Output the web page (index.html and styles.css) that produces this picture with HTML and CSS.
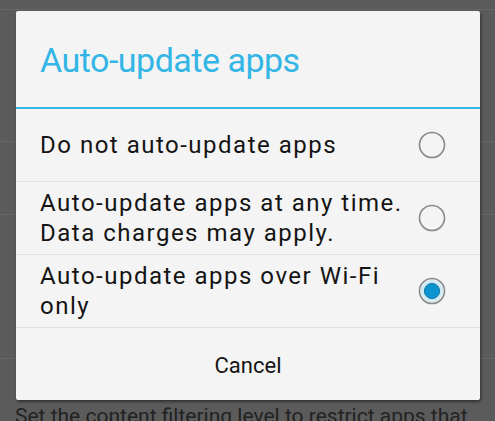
FILE: index.html
```html
<!DOCTYPE html>
<html>
<head>
<meta charset="utf-8">
<link rel="stylesheet" href="styles.css">
</head>
<body>
<div class="screen">
  <div class="bg-list">
    <div class="bg-row r1"></div>
    <div class="bg-row r2"></div>
    <div class="bg-row r3"></div>
    <div class="bg-row r4"></div>
    <div class="bg-head">Content filtering</div>
    <div class="bg-text">Set the content filtering level to restrict apps that</div>
  </div>

  <div class="dialog">
    <div class="title">Auto-update apps</div>
    <div class="option">
      <span class="label">Do not auto-update apps</span>
      <svg class="radio" width="28" height="28" viewBox="0 0 28 28"><circle cx="14" cy="14" r="12.5" fill="none" stroke="#8a8a8a" stroke-width="1.6"/></svg>
    </div>
    <div class="option">
      <span class="label">Auto-update apps at any time.<br>Data charges may apply.</span>
      <svg class="radio" width="28" height="28" viewBox="0 0 28 28"><circle cx="14" cy="14" r="12.5" fill="none" stroke="#8a8a8a" stroke-width="1.6"/></svg>
    </div>
    <div class="option">
      <span class="label">Auto-update apps over Wi-Fi<br>only</span>
      <svg class="radio" width="28" height="28" viewBox="0 0 28 28">
        <circle cx="14" cy="14" r="12.5" fill="none" stroke="#8a8a8a" stroke-width="1.6"/>
        <circle cx="14" cy="14" r="11" fill="#cfe9f5"/>
        <circle cx="14" cy="14" r="7.6" fill="#0b95cf" stroke="#1577a3" stroke-width="1"/>
      </svg>
    </div>
    <div class="button">Cancel</div>
  </div>
</div>
</body>
</html>
```
FILE: styles.css
```css
html, body {
  margin: 0;
  padding: 0;
}
body {
  background: #5b5b5b;
  font-family: Roboto, "Liberation Sans", sans-serif;
  width: 495px;
  height: 421px;
  overflow: hidden;
}
.screen {
  position: relative;
  width: 495px;
  height: 421px;
  overflow: hidden;
}
.bg-list {
  display: flex;
  flex-direction: column;
}
.bg-row {
  border-bottom: 1px solid #666666;
}
.r1 { height: 9px; }
.r2 { height: 131px; }
.r3 { height: 72px; }
.r4 { height: 143px; }
.bg-head {
  padding-left: 15px;
  font-size: 24px;
  line-height: 28px;
  height: 20px;
  color: #222;
  margin-top: 13px;
  letter-spacing: 1px;
  white-space: nowrap;
}
.bg-text {
  padding-left: 15px;
  margin-top: 11px;
  font-size: 21px;
  line-height: 26px;
  color: #222;
  white-space: nowrap;
}
.dialog {
  position: absolute;
  left: 16px;
  top: 11px;
  width: 464px;
  height: 389px;
  background: #f4f4f4;
  border-radius: 2px;
  box-shadow: 1px 2px 3px rgba(0, 0, 0, 0.45);
  display: flex;
  flex-direction: column;
}
.title {
  box-sizing: border-box;
  height: 98px;
  display: flex;
  align-items: center;
  padding-left: 24px;
  padding-top: 2px;
  font-size: 34px;
  letter-spacing: -0.5px;
  color: #33b5e5;
  border-bottom: 2px solid #33b5e5;
  flex: none;
}
.option {
  height: 73px;
  box-sizing: border-box;
  border-bottom: 1px solid #e1e1e1;
  display: flex;
  align-items: center;
  justify-content: space-between;
  padding: 0 34px 0 24px;
  flex: none;
}
.label {
  font-size: 24px;
  line-height: 30px;
  letter-spacing: 1.5px;
  color: #141414;
}
.radio {
  display: block;
  flex: none;
}
.button {
  flex: 1;
  display: flex;
  align-items: center;
  justify-content: center;
  font-size: 22px;
  color: #141414;
  padding-top: 2px;
}
```
